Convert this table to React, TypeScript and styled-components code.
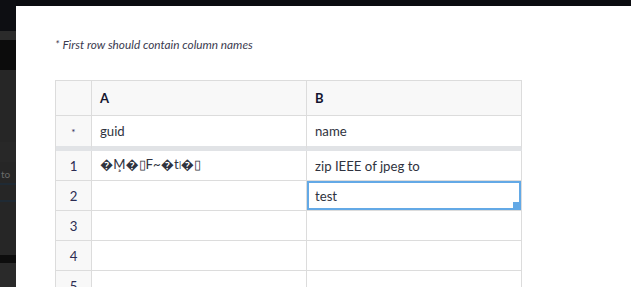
import styled, { createGlobalStyle } from 'styled-components';

const Global = createGlobalStyle`
  html, body {
    margin: 0;
    padding: 0;
    background: #0d0e12;
    overflow: hidden;
  }
  body {
    font-family: Lato, "Noto Sans", sans-serif;
  }
`;

const Page = styled.div`
  display: grid;
  grid-template-columns: 16px 1fr;
  width: 631px;
  height: 287px;
  overflow: hidden;
`;

const Backdrop = styled.div`
  display: flex;
  flex-direction: column;
  overflow: hidden;
`;

const Stripe = styled.div<{ h: number; bg: string }>`
  height: ${(p) => p.h}px;
  flex-shrink: 0;
  background: ${(p) => p.bg};
  color: #6a6a6a;
  font-size: 10px;
  line-height: ${(p) => p.h + 4}px;
  white-space: nowrap;
  padding-left: 1px;
`;

const Main = styled.div`
  display: flex;
  flex-direction: column;
  min-width: 0;
`;

const TopBar = styled.div`
  height: 6px;
  flex-shrink: 0;
  background: #0b0c10;
`;

const Modal = styled.div`
  flex: 1;
  background: #fff;
  padding: 30px 0 0 39px;
`;

const Hint = styled.p`
  margin: 0 0 27px;
  font-size: 11.8px;
  line-height: 17px;
  font-style: italic;
  color: #3b3b4f;
`;

const Grid = styled.div`
  display: grid;
  grid-template-columns: 36px 215px 215px;
  border-left: 1px solid #dcdcdc;
  border-top: 1px solid #dcdcdc;
  width: max-content;
`;

const Cell = styled.div<{ head?: boolean; index?: boolean; h?: number; selected?: boolean; sep?: boolean }>`
  position: relative;
  box-sizing: border-box;
  height: ${(p) => p.h ?? 30}px;
  border-right: 1px solid #dcdcdc;
  border-bottom: ${(p) => (p.sep ? '5px solid #e1e3e6' : '1px solid #dcdcdc')};
  background: ${(p) => (p.head || p.index ? '#f8f8f8' : '#fff')};
  display: flex;
  align-items: center;
  justify-content: ${(p) => (p.index ? 'center' : 'flex-start')};
  padding: ${(p) => (p.index ? '0' : '0 0 0 8px')};
  font-size: ${(p) => (p.head ? '13px' : '13.2px')};
  font-weight: ${(p) => (p.head ? 700 : 400)};
  color: ${(p) => (p.head ? '#14142e' : p.index ? '#2c2c52' : '#2f3340')};
  white-space: nowrap;
  ${(p) =>
    p.selected &&
    `
    box-shadow: inset 0 0 0 2px #63a9e6;
  `}
`;

const Handle = styled.span`
  position: absolute;
  right: 1px;
  bottom: 1px;
  width: 7px;
  height: 7px;
  background: #63a9e6;
`;

const Star = styled.span`
  font-size: 10px;
  margin-top: 2px;
`;

const rows: { idx: string; a: string; b: string }[] = [
  { idx: '1', a: '\uFFFDM\u0327\uFFFD\u25AFF~\uFFFDt\u09F7\uFFFD\u25AF', b: 'zip IEEE of jpeg to' },
  { idx: '2', a: '', b: 'test' },
  { idx: '3', a: '', b: '' },
  { idx: '4', a: '', b: '' },
  { idx: '5', a: '', b: '' },
];

export default function App() {
  return (
    <Page>
      <Global />
      <Backdrop>
        <Stripe h={31} bg="#0d0e12" />
        <Stripe h={9} bg="#2b2b2b" />
        <Stripe h={30} bg="#0c0c0c" />
        <Stripe h={48} bg="#262626" />
        <Stripe h={24} bg="#262626" />
        <Stripe h={20} bg="#282828" />
        <Stripe h={21} bg="#262626">to</Stripe>
        <Stripe h={2} bg="#1f2a34" />
        <Stripe h={15} bg="#262626" />
        <Stripe h={2} bg="#1f2a34" />
        <Stripe h={53} bg="#262626" />
        <Stripe h={8} bg="#0d0d0d" />
        <Stripe h={30} bg="#2a2a2a" />
      </Backdrop>
      <Main>
        <TopBar />
        <Modal>
          <Hint>* First row should contain column names</Hint>
          <Grid>
            <Cell head index h={35} />
            <Cell head h={35}>A</Cell>
            <Cell head h={35}>B</Cell>

            <Cell index h={35} sep><Star>*</Star></Cell>
            <Cell h={35} sep>guid</Cell>
            <Cell h={35} sep>name</Cell>

            {rows.flatMap((r) => [
              <Cell key={r.idx + 'i'} index>{r.idx}</Cell>,
              <Cell key={r.idx + 'a'}>{r.a}</Cell>,
              <Cell key={r.idx + 'b'} selected={r.idx === '2'}>
                {r.b}
                {r.idx === '2' && <Handle />}
              </Cell>,
            ])}
          </Grid>
        </Modal>
      </Main>
    </Page>
  );
}
